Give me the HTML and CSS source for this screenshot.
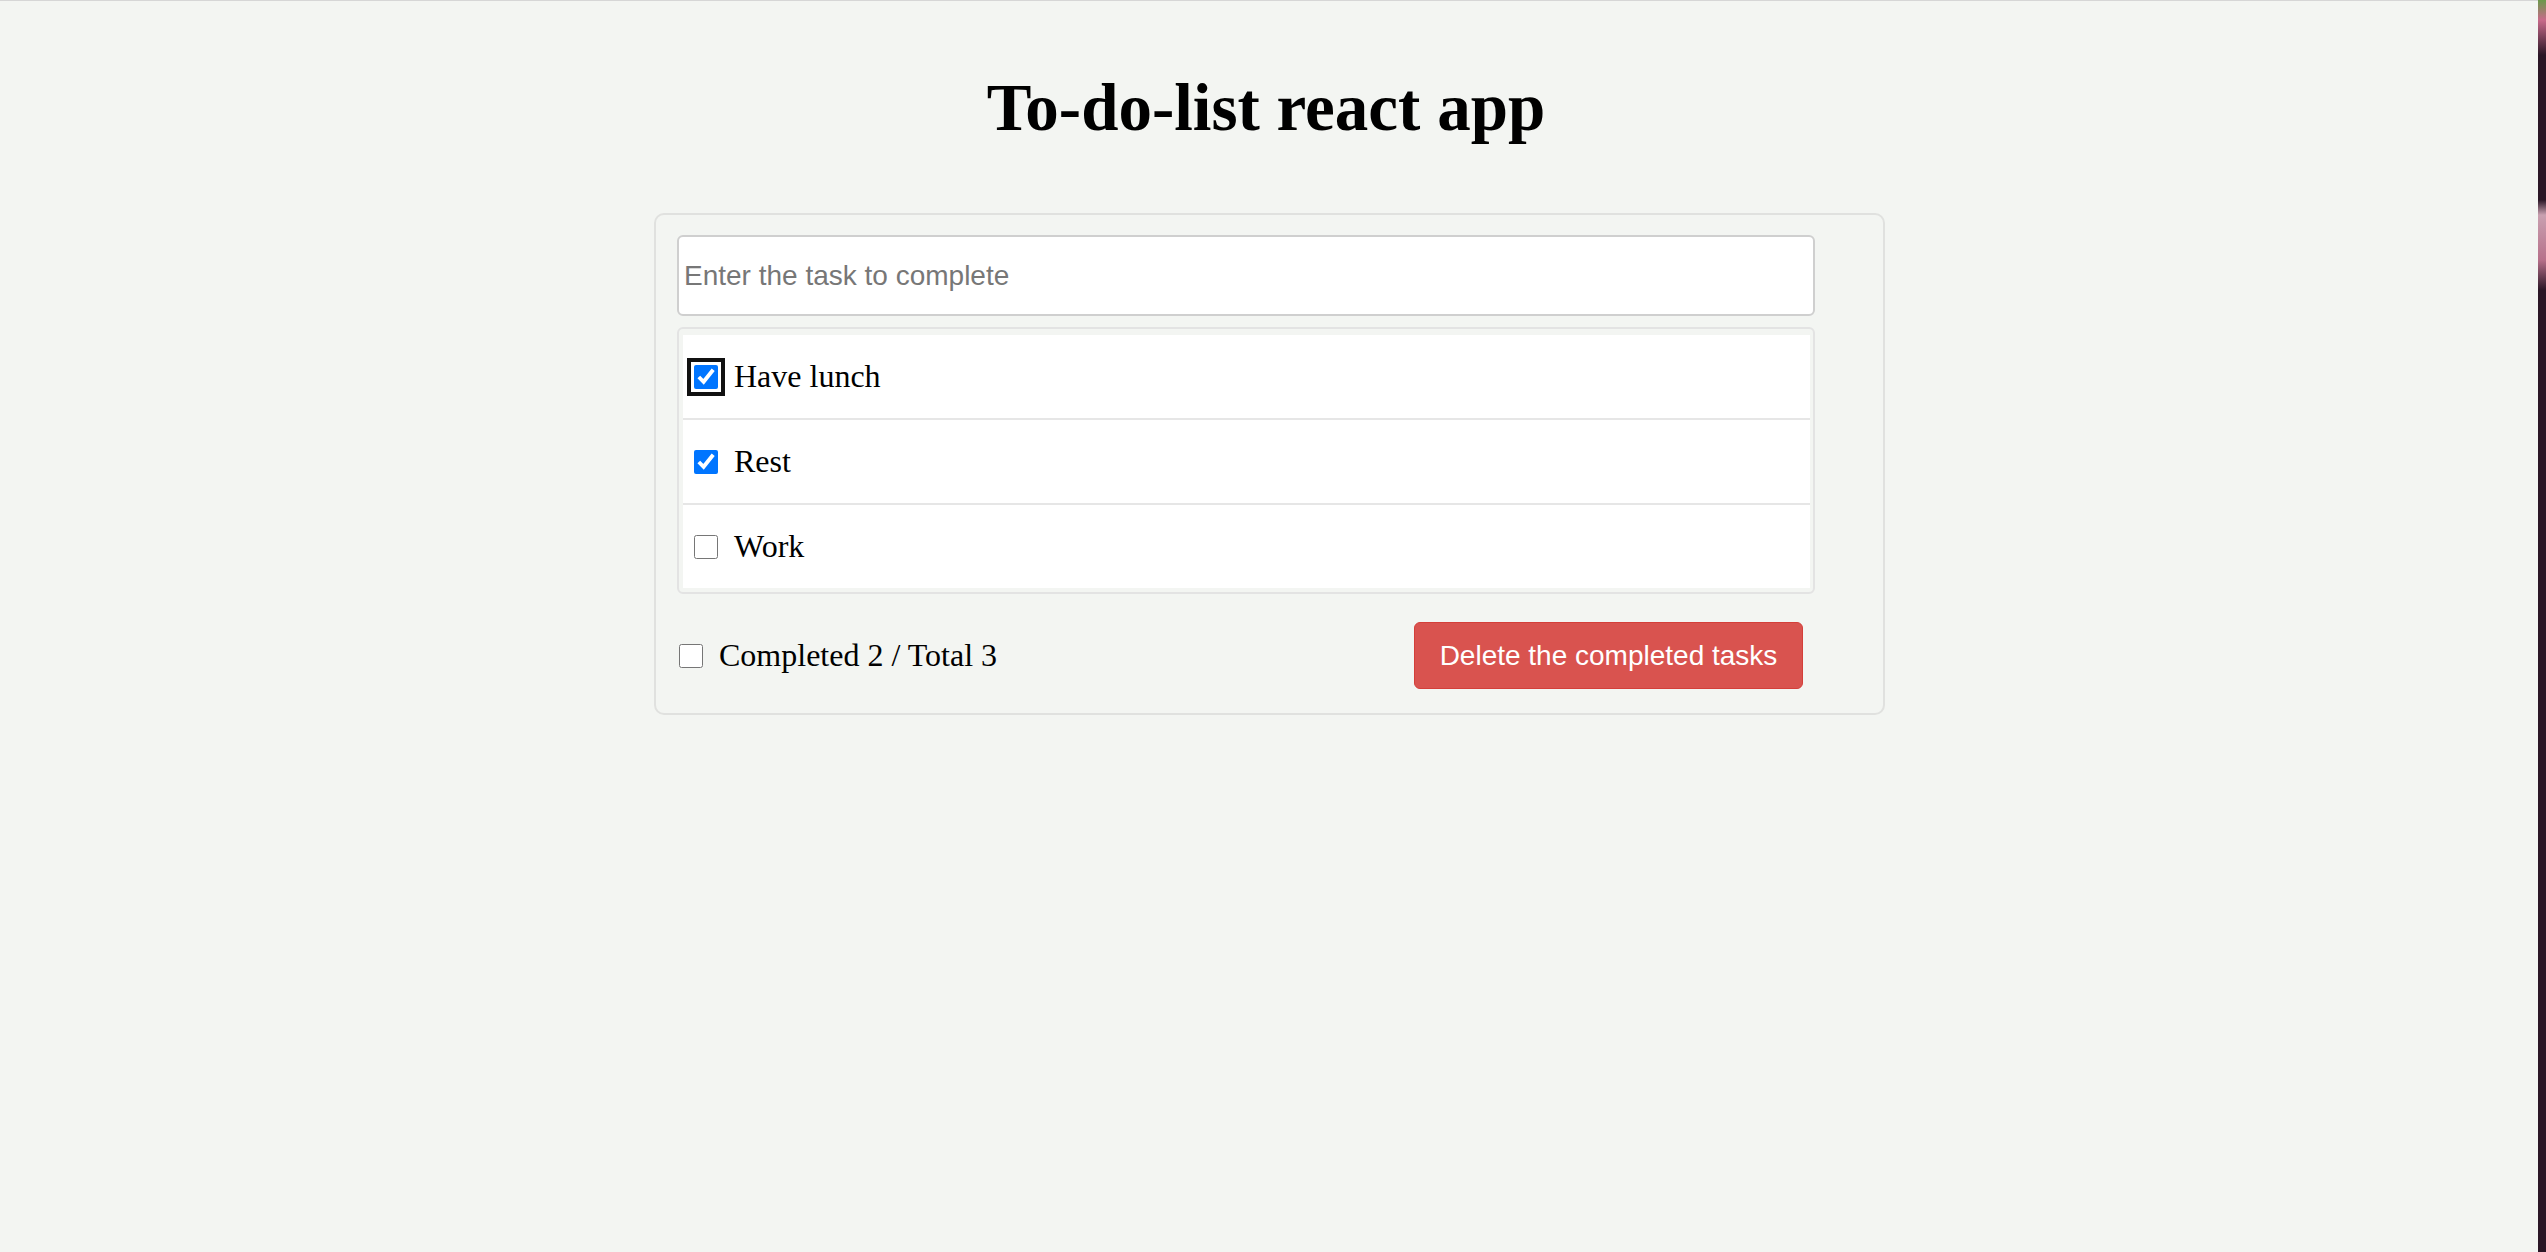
FILE: index.html
```html
<!DOCTYPE html>
<html lang="en">
<head>
<meta charset="utf-8">
<title>To-do-list react app</title>
<link rel="stylesheet" href="styles.css">
</head>
<body>
<div class="window">
  <main class="page">
    <h1 class="title">To-do-list react app</h1>
    <section class="card">
      <input class="task-input" type="text" placeholder="Enter the task to complete">
      <ul class="task-list">
        <li class="task-row">
          <input class="check focused" type="checkbox" checked>
          <span class="task-text">Have lunch</span>
        </li>
        <li class="task-row">
          <input class="check" type="checkbox" checked>
          <span class="task-text">Rest</span>
        </li>
        <li class="task-row">
          <input class="check" type="checkbox">
          <span class="task-text">Work</span>
        </li>
      </ul>
      <div class="footer">
        <label class="summary">
          <input class="check footer-check" type="checkbox">
          <span class="task-text">Completed 2 / Total 3</span>
        </label>
        <button class="btn-danger" type="button">Delete the completed tasks</button>
      </div>
    </section>
  </main>
  <div class="desktop-edge"></div>
</div>
</body>
</html>
```
FILE: styles.css
```css
* {
  box-sizing: border-box;
}

html, body {
  margin: 0;
  padding: 0;
  height: 100%;
}

body {
  background: #f3f5f2;
  font-family: "Liberation Serif", "Times New Roman", serif;
  color: #000;
}

.window {
  display: flex;
  height: 100vh;
}

.page {
  flex: 1;
  border-top: 1px solid #d6d6d6;
  background: #f3f5f2;
  display: flex;
  flex-direction: column;
  align-items: center;
}

.desktop-edge {
  width: 8px;
  background: linear-gradient(to bottom, #6a9a4a 0px, #c86a8a 20px, #2a1626 55px, #2a1626 200px, #c9a0b0 215px, #b7708a 260px, #2a1626 290px, #2a1626 100%);
}

.title {
  margin: 68px 0 0 -6px;
  font-family: "Liberation Serif", "Times New Roman", serif;
  font-weight: bold;
  font-size: 67px;
  line-height: 76px;
  height: 76px;
}

.card {
  margin-top: 68px;
  width: 1231px;
  margin-left: 1px;
  border: 2px solid #e0e1df;
  border-radius: 10px;
  padding: 20px 68px 24px 21px;
  display: flex;
  flex-direction: column;
}

.task-input {
  display: block;
  width: 100%;
  height: 81px;
  border: 2px solid #cfcfcf;
  border-radius: 6px;
  background: #fff;
  padding: 0 5px;
  font-family: "Liberation Sans", Arial, sans-serif;
  font-size: 28px;
  color: #333;
  outline: none;
}

.task-input::placeholder {
  color: #777;
}

.task-list {
  list-style: none;
  margin: 11px 0 0 0;
  padding: 6px 3px 4px 4px;
  border: 2px solid #e3e3e3;
  border-radius: 6px;
}

.task-row {
  display: flex;
  align-items: center;
  height: 83px;
  background: #fff;
  padding-left: 11px;
}

.task-row + .task-row {
  height: 85px;
  border-top: 2px solid #e6e6e6;
}

.check {
  width: 24px;
  height: 24px;
  margin: 0 16px 0 0;
  border-radius: 4px;
  accent-color: #0075ff;
  flex: none;
}

.check.focused {
  outline: 4px solid #111;
  outline-offset: 3px;
}

.task-text {
  font-family: "Liberation Serif", "Times New Roman", serif;
  font-size: 32px;
  line-height: 37px;
}

.footer {
  margin-top: 28px;
  display: flex;
  align-items: center;
  justify-content: space-between;
  padding-right: 12px;
}

.summary {
  display: flex;
  align-items: center;
  padding-left: 2px;
}

.footer-check {
  margin-right: 16px;
}

.btn-danger {
  width: 389px;
  height: 67px;
  background: #d9534f;
  border: 1px solid #d43f3a;
  border-radius: 6px;
  color: #fff;
  font-family: "Liberation Sans", Arial, sans-serif;
  font-size: 28px;
  padding: 0;
  cursor: pointer;
}
```
